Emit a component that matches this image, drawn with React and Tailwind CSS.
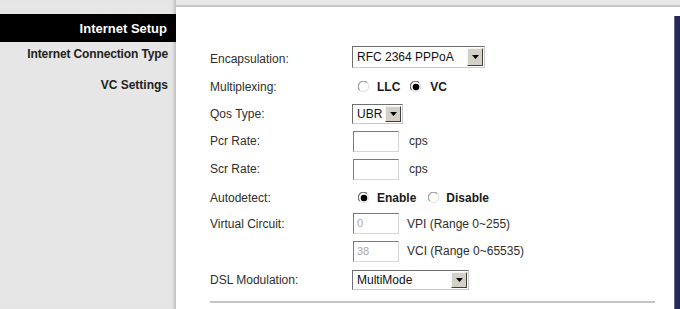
import React from "react";

const font = { fontFamily: '"Liberation Sans", Arial, sans-serif' };

function Arrow() {
  return (
    <div className="flex h-full w-[16px] items-center justify-center border border-t-[#f4f4f4] border-l-[#f4f4f4] border-r-[#404040] border-b-[#404040] bg-[#d4d0c8]">
      <svg width="7" height="4" viewBox="0 0 7 4">
        <path d="M0 0 H7 L3.5 4 Z" fill="#000" />
      </svg>
    </div>
  );
}

function Select({ value, w }) {
  return (
    <div
      className={`flex items-stretch border border-t-[#6f6f6f] border-l-[#6f6f6f] border-b-[#c9c9c9] border-r-[#c9c9c9] bg-white p-[1px] ${w}`}
    >
      <div className="flex flex-1 items-center pl-[3px] text-[12px] leading-none text-[#111]">{value}</div>
      <Arrow />
    </div>
  );
}

function Input({ value }) {
  return (
    <div className="ml-[1px] flex h-[21px] w-[46px] items-center border border-t-[#7a7a7a] border-l-[#7a7a7a] border-b-[#d6d6d6] border-r-[#d6d6d6] bg-white pl-[3px] text-[11px] leading-none text-[#a8a8a8]">
      {value}
    </div>
  );
}

function Radio({ checked }) {
  return (
    <svg width="12" height="12" viewBox="0 0 12 12" className="shrink-0">
      <circle cx="6" cy="6" r="5.5" fill="#fff" />
      <path d="M1.8 9.2 A4.6 4.6 0 0 1 9.2 1.8" fill="none" stroke={checked ? "#6a6a6a" : "#9a9a9a"} strokeWidth="1.2" />
      <path d="M9.2 1.8 A4.6 4.6 0 0 1 1.8 9.2" fill="none" stroke="#e4e4e4" strokeWidth="1.2" />
      {checked && <circle cx="6" cy="6" r="3.3" fill="#000" />}
    </svg>
  );
}

function Row({ label, h, lpad = "", children }) {
  return (
    <div className={`flex items-center ${h}`}>
      <div className={`w-[142px] shrink-0 text-[12px] leading-none text-[#2e2e2e] ${lpad}`}>{label}</div>
      <div className="flex items-center">{children}</div>
    </div>
  );
}

export default function App() {
  return (
    <div style={font} className="flex h-[309px] w-[680px] overflow-hidden bg-[#e6e6e6]">
      {/* left menu */}
      <div className="flex w-[176px] shrink-0 flex-col pt-[14px] shadow-[inset_-4px_0_3px_-2px_#bdbdbd]">
        <div className="flex h-[28px] items-center justify-end bg-black pr-[9px] text-[13px] font-bold leading-none text-white">
          Internet Setup
        </div>
        <div className="flex h-[22px] items-center justify-end pr-[8px] pt-[1px] text-[12px] font-bold leading-none tracking-[-0.13px] text-[#222]">
          Internet Connection Type
        </div>
        <div className="flex h-[34px] items-center justify-end pr-[8px] pt-[8px] text-[12px] font-bold leading-none text-[#222]">
          VC Settings
        </div>
      </div>

      {/* main panel */}
      <div className="mt-[5px] flex flex-1 border-t-2 border-[#c6c6c6] bg-white">
        <div className="flex flex-1 flex-col pl-[34px] pt-[36px]">
          <Row label="Encapsulation:" h="h-[28px]" lpad="pt-[4px]">
            <Select value="RFC 2364 PPPoA" w="w-[133px] h-[22px]" />
          </Row>
          <Row label="Multiplexing:" h="h-[31px]">
            <div className="ml-[6px] flex items-center text-[12px] font-bold leading-none text-[#1a1a1a]">
              <Radio />
              <span className="ml-[7px]">LLC</span>
              <span className="ml-[10px]"><Radio checked /></span>
              <span className="ml-[8px]">VC</span>
            </div>
          </Row>
          <Row label="Qos Type:" h="h-[24px]">
            <Select value="UBR" w="w-[51px] h-[20px]" />
          </Row>
          <Row label="Pcr Rate:" h="h-[30px]">
            <Input value="" />
            <span className="ml-[10px] text-[12px] leading-none text-[#2e2e2e]">cps</span>
          </Row>
          <Row label="Scr Rate:" h="h-[26px]">
            <Input value="" />
            <span className="ml-[10px] text-[12px] leading-none text-[#2e2e2e]">cps</span>
          </Row>
          <Row label="Autodetect:" h="h-[31px]">
            <div className="ml-[6px] flex items-center text-[12px] font-bold leading-none text-[#1a1a1a]">
              <Radio checked />
              <span className="ml-[7px]">Enable</span>
              <span className="ml-[12px]"><Radio /></span>
              <span className="ml-[6px]">Disable</span>
            </div>
          </Row>
          <Row label="Virtual Circuit:" h="h-[21px]">
            <Input value="0" />
            <span className="ml-[8px] text-[12px] leading-none text-[#2e2e2e]">VPI (Range 0~255)</span>
          </Row>
          <Row label="" h="h-[34px]">
            <Input value="38" />
            <span className="ml-[8px] text-[12px] leading-none text-[#2e2e2e]">VCI (Range 0~65535)</span>
          </Row>
          <Row label="DSL Modulation:" h="h-[23px]">
            <Select value="MultiMode" w="w-[117px] h-[20px]" />
          </Row>
          <div className="mt-[10px] h-[2px] w-[445px] bg-[#c4c4c4]" />
        </div>
        <div className="mt-[9px] w-[6px] shrink-0 border-l border-[#6a6d90] bg-[#262957]" />
      </div>
    </div>
  );
}
